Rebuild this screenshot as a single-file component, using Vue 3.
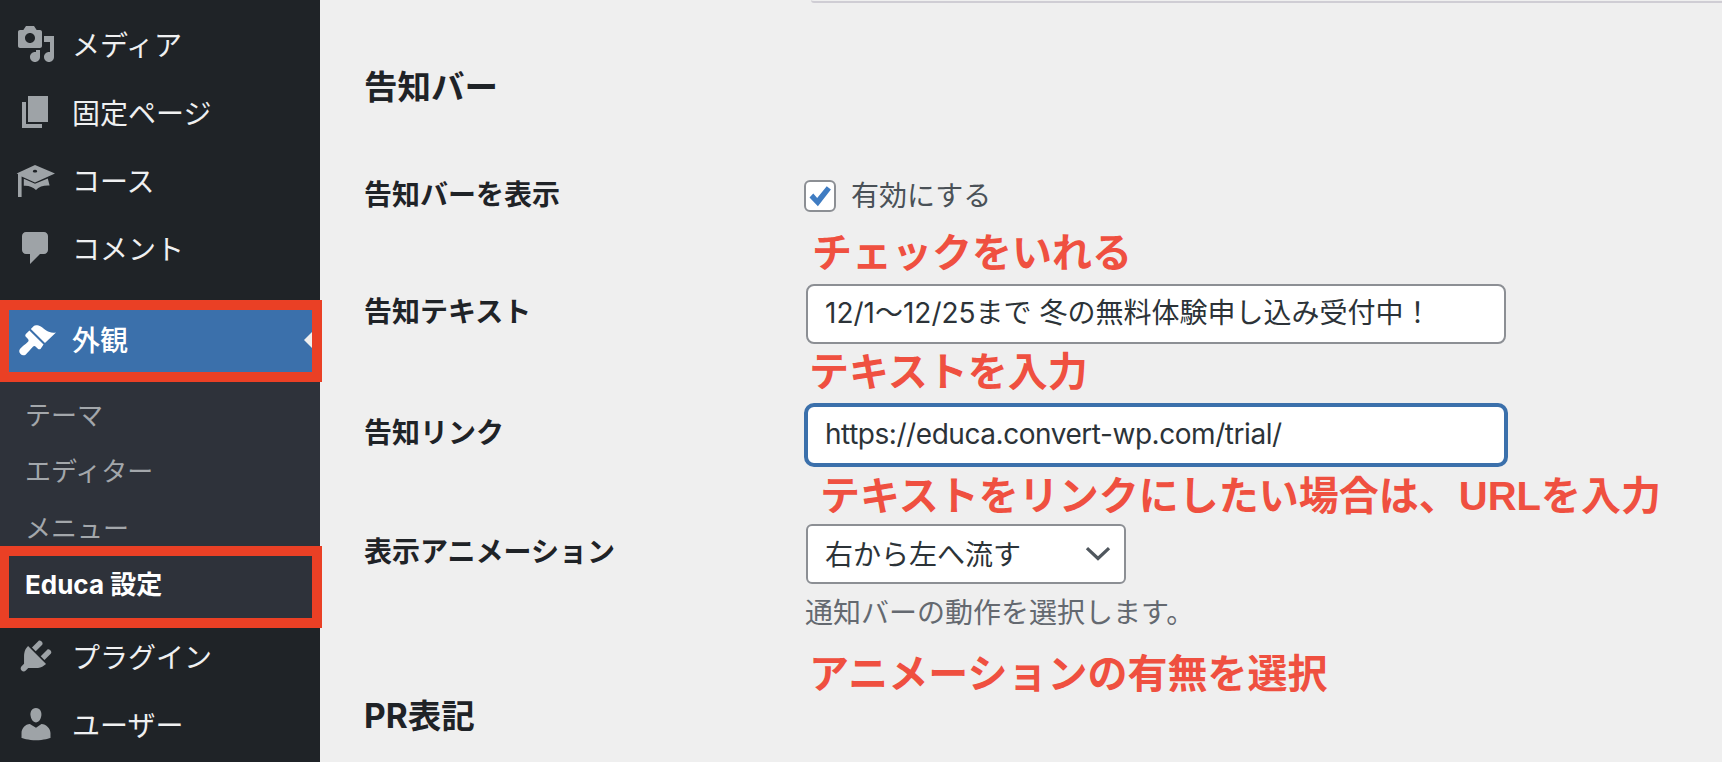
<template>
  <div class="page">
    <aside class="sidebar">
      <a v-for="item in topItems" :key="item.label" class="menu-item">
        <svg class="menu-icon" viewBox="0 0 20 20"><path :d="item.icon" /></svg>
        <span class="menu-text">{{ item.label }}</span>
      </a>

      <div class="mark mark-first">
        <a class="menu-item active">
          <svg class="menu-icon" viewBox="0 0 20 20"><path :d="icons.appearance" /></svg>
          <span class="menu-text">外観</span>
          <i class="active-arrow"></i>
        </a>
      </div>

      <div class="submenu">
        <a v-for="sub in subItems" :key="sub" class="sub-item">{{ sub }}</a>
      </div>
      <div class="mark mark-second">
        <a class="sub-current">Educa 設定</a>
      </div>

      <a v-for="item in bottomItems" :key="item.label" class="menu-item">
        <svg class="menu-icon" viewBox="0 0 20 20"><path :d="item.icon" /></svg>
        <span class="menu-text">{{ item.label }}</span>
      </a>
    </aside>

    <main class="content">
      <div class="prev-field"></div>
      <h2 class="section-title">告知バー</h2>

      <div class="row row-check">
        <div class="row-label">告知バーを表示</div>
        <div class="check-wrap">
          <span class="checkbox">
            <svg viewBox="0 0 20 20"><path d="M2.500 11l2.700-2.700 2.800 3.200 6.800-8.500 3 2.300-9.300 12z" /></svg>
          </span>
          <span>有効にする</span>
        </div>
      </div>
      <div class="note note-check">チェックをいれる</div>

      <div class="row row-text">
        <div class="row-label">告知テキスト</div>
        <div class="input">12/1〜12/25まで 冬の無料体験申し込み受付中！</div>
      </div>
      <div class="note note-text">テキストを入力</div>

      <div class="row row-link">
        <div class="row-label">告知リンク</div>
        <div class="input focused">https://educa.convert-wp.com/trial/</div>
      </div>
      <div class="note note-link">テキストをリンクにしたい場合は、URLを入力</div>

      <div class="row row-select">
        <div class="row-label">表示アニメーション</div>
        <div class="select">
          <span>右から左へ流す</span>
          <svg viewBox="0 0 20 20"><path d="M1.500 5.500l8.500 8 8.500-8" /></svg>
        </div>
      </div>
      <p class="hint">通知バーの動作を選択します。</p>
      <div class="note note-anim">アニメーションの有無を選択</div>

      <h2 class="section-title pr-title">PR表記</h2>
    </main>
  </div>
</template>

<script setup>
const icons = {
  media: 'M13 11V4c0-.55-.45-1-1-1h-1.670L9 1H5L3.670 3H2c-.55 0-1 .45-1 1v7c0 .55.45 1 1 1h10c.55 0 1-.45 1-1zM7 4.500c1.380 0 2.500 1.120 2.500 2.500S8.380 9.500 7 9.500 4.500 8.380 4.500 7 5.620 4.500 7 4.500zM14 6h5v10.500c0 1.380-1.120 2.500-2.500 2.500S14 17.880 14 16.500s1.120-2.500 2.500-2.500c.17 0 .34.020.5.050V9h-3V6zm-4 8.050V13h2v3.500c0 1.380-1.120 2.500-2.500 2.500S7 17.880 7 16.500 8.120 14 9.500 14c.17 0 .34.020.5.050z',
  page: 'M6 15V2h10v13H6zm-1 1h8v2H3V5h2v11z',
  course: 'M9.500 2.500L19.500 6.700L9.500 11.200L2.800 8.200V18.500H1V7L.3 6.700zM9.500 4.900a1.100.7 0 1 0 .01 0zM3.900 9.400L9.500 11.900L15.900 9.200L16.800 12.800C14 12.600 11.500 13.300 10 15C8.500 13.600 6.200 12.600 3.900 12.900z',
  comment: 'M5 2h9c1.100 0 2 .9 2 2v7c0 1.100-.9 2-2 2h-2l-5 5v-5H5c-1.100 0-2-.9-2-2V4c0-1.100.9-2 2-2z',
  appearance: 'M14.480 11.060L7.410 3.990l1.500-1.500c.5-.56 2.300-.47 3.510.32 1.210.8 1.430 1.280 2.910 2.100 1.180.64 2.450 1.260 4.670.85l-5.520 5.300zm-.71.710L6.700 4.700 4.930 6.470c-.39.390-.39 1.020 0 1.410l1.060 1.060c.39.390.39 1.030 0 1.420-.6.600-1.430 1.270-2.210 1.910-.78.660-1.430 1.280-1.780 1.770-.34.470-.47 1.090-.24 1.650.21.550.81 1.150 1.370 1.370.56.230 1.180.1 1.650-.24.490-.35 1.110-1 1.770-1.780.64-.78 1.310-1.610 1.910-2.210.39-.39 1.030-.39 1.420 0l1.060 1.060c.39.390 1.020.39 1.410 0z',
  plugin: 'M13.110 4.360L9.870 7.600 8 5.730l3.240-3.240c.35-.34 1.050-.2 1.560.32.52.51.66 1.210.31 1.550zm-8 1.770l.91-1.120 9.010 9.010-1.190.84c-.71.710-2.630 1.160-3.820 1.160H6.140L4.900 17.260c-.59.590-1.540.59-2.120 0-.59-.58-.59-1.530 0-2.120l1.240-1.240v-3.880c0-1.130.4-3.190 1.090-3.890zm7.260 3.970l3.240-3.240c.34-.35 1.040-.21 1.550.31.520.51.660 1.210.31 1.550l-3.240 3.250z',
  user: 'M10 9.250c-2.270 0-2.730-3.440-2.730-3.440C7 4.020 7.820 2 9.970 2c2.160 0 2.980 2.020 2.710 3.810 0 0-.41 3.440-2.680 3.440zm0 2.570L12.720 10c2.390 0 4.520 2.330 4.520 4.530v2.490s-3.650 1.130-7.240 1.130c-3.650 0-7.240-1.130-7.240-1.130v-2.490c0-2.250 1.940-4.480 4.150-4.480z'
}

const topItems = [
  { label: 'メディア', icon: icons.media },
  { label: '固定ページ', icon: icons.page },
  { label: 'コース', icon: icons.course },
  { label: 'コメント', icon: icons.comment }
]

const subItems = ['テーマ', 'エディター', 'メニュー']

const bottomItems = [
  { label: 'プラグイン', icon: icons.plugin },
  { label: 'ユーザー', icon: icons.user }
]
</script>

<style>
html,
body {
  margin: 0;
  overflow: hidden;
  background: #efefef;
}
</style>

<style scoped>
.page {
  display: flex;
  width: 1722px;
  height: 762px;
  overflow: hidden;
  background: #efefef;
  font-family: Inter, "Noto Sans CJK JP", sans-serif;
  color: #2c3338;
}

.sidebar {
  flex: 0 0 320px;
  width: 320px;
  padding-top: 10px;
  background: #1f2327;
  box-sizing: border-box;
}

.menu-item {
  display: flex;
  align-items: center;
  height: 68px;
  padding-left: 16px;
  color: #eff0f1;
  font-size: 28px;
  position: relative;
}

.menu-text {
  padding-bottom: 1px;
}

.menu-icon {
  flex: 0 0 40px;
  width: 40px;
  height: 40px;
  margin-right: 16px;
  fill: #9ea3a7;
  fill-rule: evenodd;
}

.mark {
  width: 322px;
  box-sizing: border-box;
  border: 10px solid #ea4025;
  border-left-width: 9px;
  position: relative;
  z-index: 1;
}

.mark-first {
  margin-top: 18px;
}

.menu-item.active {
  height: 62px;
  padding-left: 7px;
  background: #3b70ab;
  color: #fff;
  font-weight: 500;
}

.menu-item.active .menu-text {
  padding-bottom: 4px;
}

.menu-item.active .menu-icon {
  fill: #fff;
}

.active-arrow {
  position: absolute;
  right: 0;
  top: 22px;
  border-top: 8px solid transparent;
  border-bottom: 8px solid transparent;
  border-right: 8px solid #efefef;
}

.submenu {
  height: 164px;
  padding-top: 3px;
  box-sizing: border-box;
  background: #2e323a;
}

.sub-item {
  display: flex;
  align-items: center;
  height: 56.500px;
  padding-left: 25px;
  color: #a3a7ab;
  font-size: 26px;
}

.mark-second {
  background: #2e323a;
  margin-bottom: -6px;
}

.sub-current {
  display: flex;
  align-items: center;
  height: 62px;
  padding: 0 0 10px 16px;
  box-sizing: border-box;
  color: #fff;
  font-size: 26px;
  font-weight: 700;
}

.content {
  flex: 1;
  padding-left: 44px;
  min-width: 0;
}

.prev-field {
  height: 3px;
  margin-left: 447px;
  border-bottom: 2px solid #cfcdd4;
  border-radius: 0 0 0 6px;
  box-sizing: border-box;
}

.section-title {
  margin: 63px 0 0;
  font-size: 33.500px;
  line-height: 42px;
  font-weight: 700;
  color: #1f2327;
}

.row {
  display: flex;
  align-items: flex-start;
}

.row-label {
  flex: 0 0 442px;
  font-size: 28px;
  line-height: 38px;
  font-weight: 700;
  color: #1f2327;
}

.row-check {
  margin-top: 68px;
  height: 40px;
}

.check-wrap {
  display: flex;
  align-items: center;
  gap: 15px;
  margin-left: -2px;
  font-size: 28px;
  line-height: 40px;
  color: #4a5157;
}

.checkbox {
  width: 32px;
  height: 32px;
  box-sizing: border-box;
  border: 2px solid #8c8f94;
  border-radius: 6px;
  background: #fff;
}

.checkbox svg {
  display: block;
  width: 28px;
  height: 28px;
  fill: #3f7cc2;
}

.note {
  font-family: "Liberation Sans", "Noto Sans CJK JP", sans-serif;
  font-size: 40px;
  line-height: 50px;
  font-weight: 700;
  color: #ef5040;
}

.note-check {
  margin: 12px 0 0 448px;
}

.input {
  width: 700px;
  height: 60px;
  box-sizing: border-box;
  border: 2px solid #8c8f94;
  border-radius: 8px;
  background: #fff;
  padding-left: 17px;
  font-size: 28px;
  line-height: 54px;
  white-space: nowrap;
}

.input.focused {
  width: 704px;
  height: 64px;
  margin-left: -2px;
  border: 4px solid #3b70ab;
  border-radius: 10px;
  line-height: 54px;
  letter-spacing: -0.450px;
}

.row-text {
  margin-top: 6px;
}

.row-text .row-label {
  padding-top: 9px;
}

.note-text {
  margin: 3px 0 0 445px;
}

.row-link {
  margin-top: 6px;
}

.row-link .row-label {
  padding-top: 11px;
}

.note-link {
  margin: 4px 0 0 456px;
}

.row-select {
  margin-top: 3px;
}

.row-select .row-label {
  padding-top: 9px;
}

.select {
  display: flex;
  align-items: center;
  justify-content: space-between;
  width: 320px;
  height: 60px;
  box-sizing: border-box;
  border: 2px solid #8c8f94;
  border-radius: 6px;
  background: #fff;
  padding: 0 13px 0 17px;
  font-size: 28px;
}

.select span {
  padding-bottom: 3px;
}

.select svg {
  width: 26px;
  height: 26px;
  fill: none;
  stroke: #50575e;
  stroke-width: 2.500;
}

.hint {
  margin: 10px 0 0 441px;
  font-size: 28px;
  line-height: 38px;
  color: #646970;
}

.note-anim {
  margin: 23px 0 0 445px;
  line-height: 38px;
}

.pr-title {
  margin-top: 2px;
}
</style>
